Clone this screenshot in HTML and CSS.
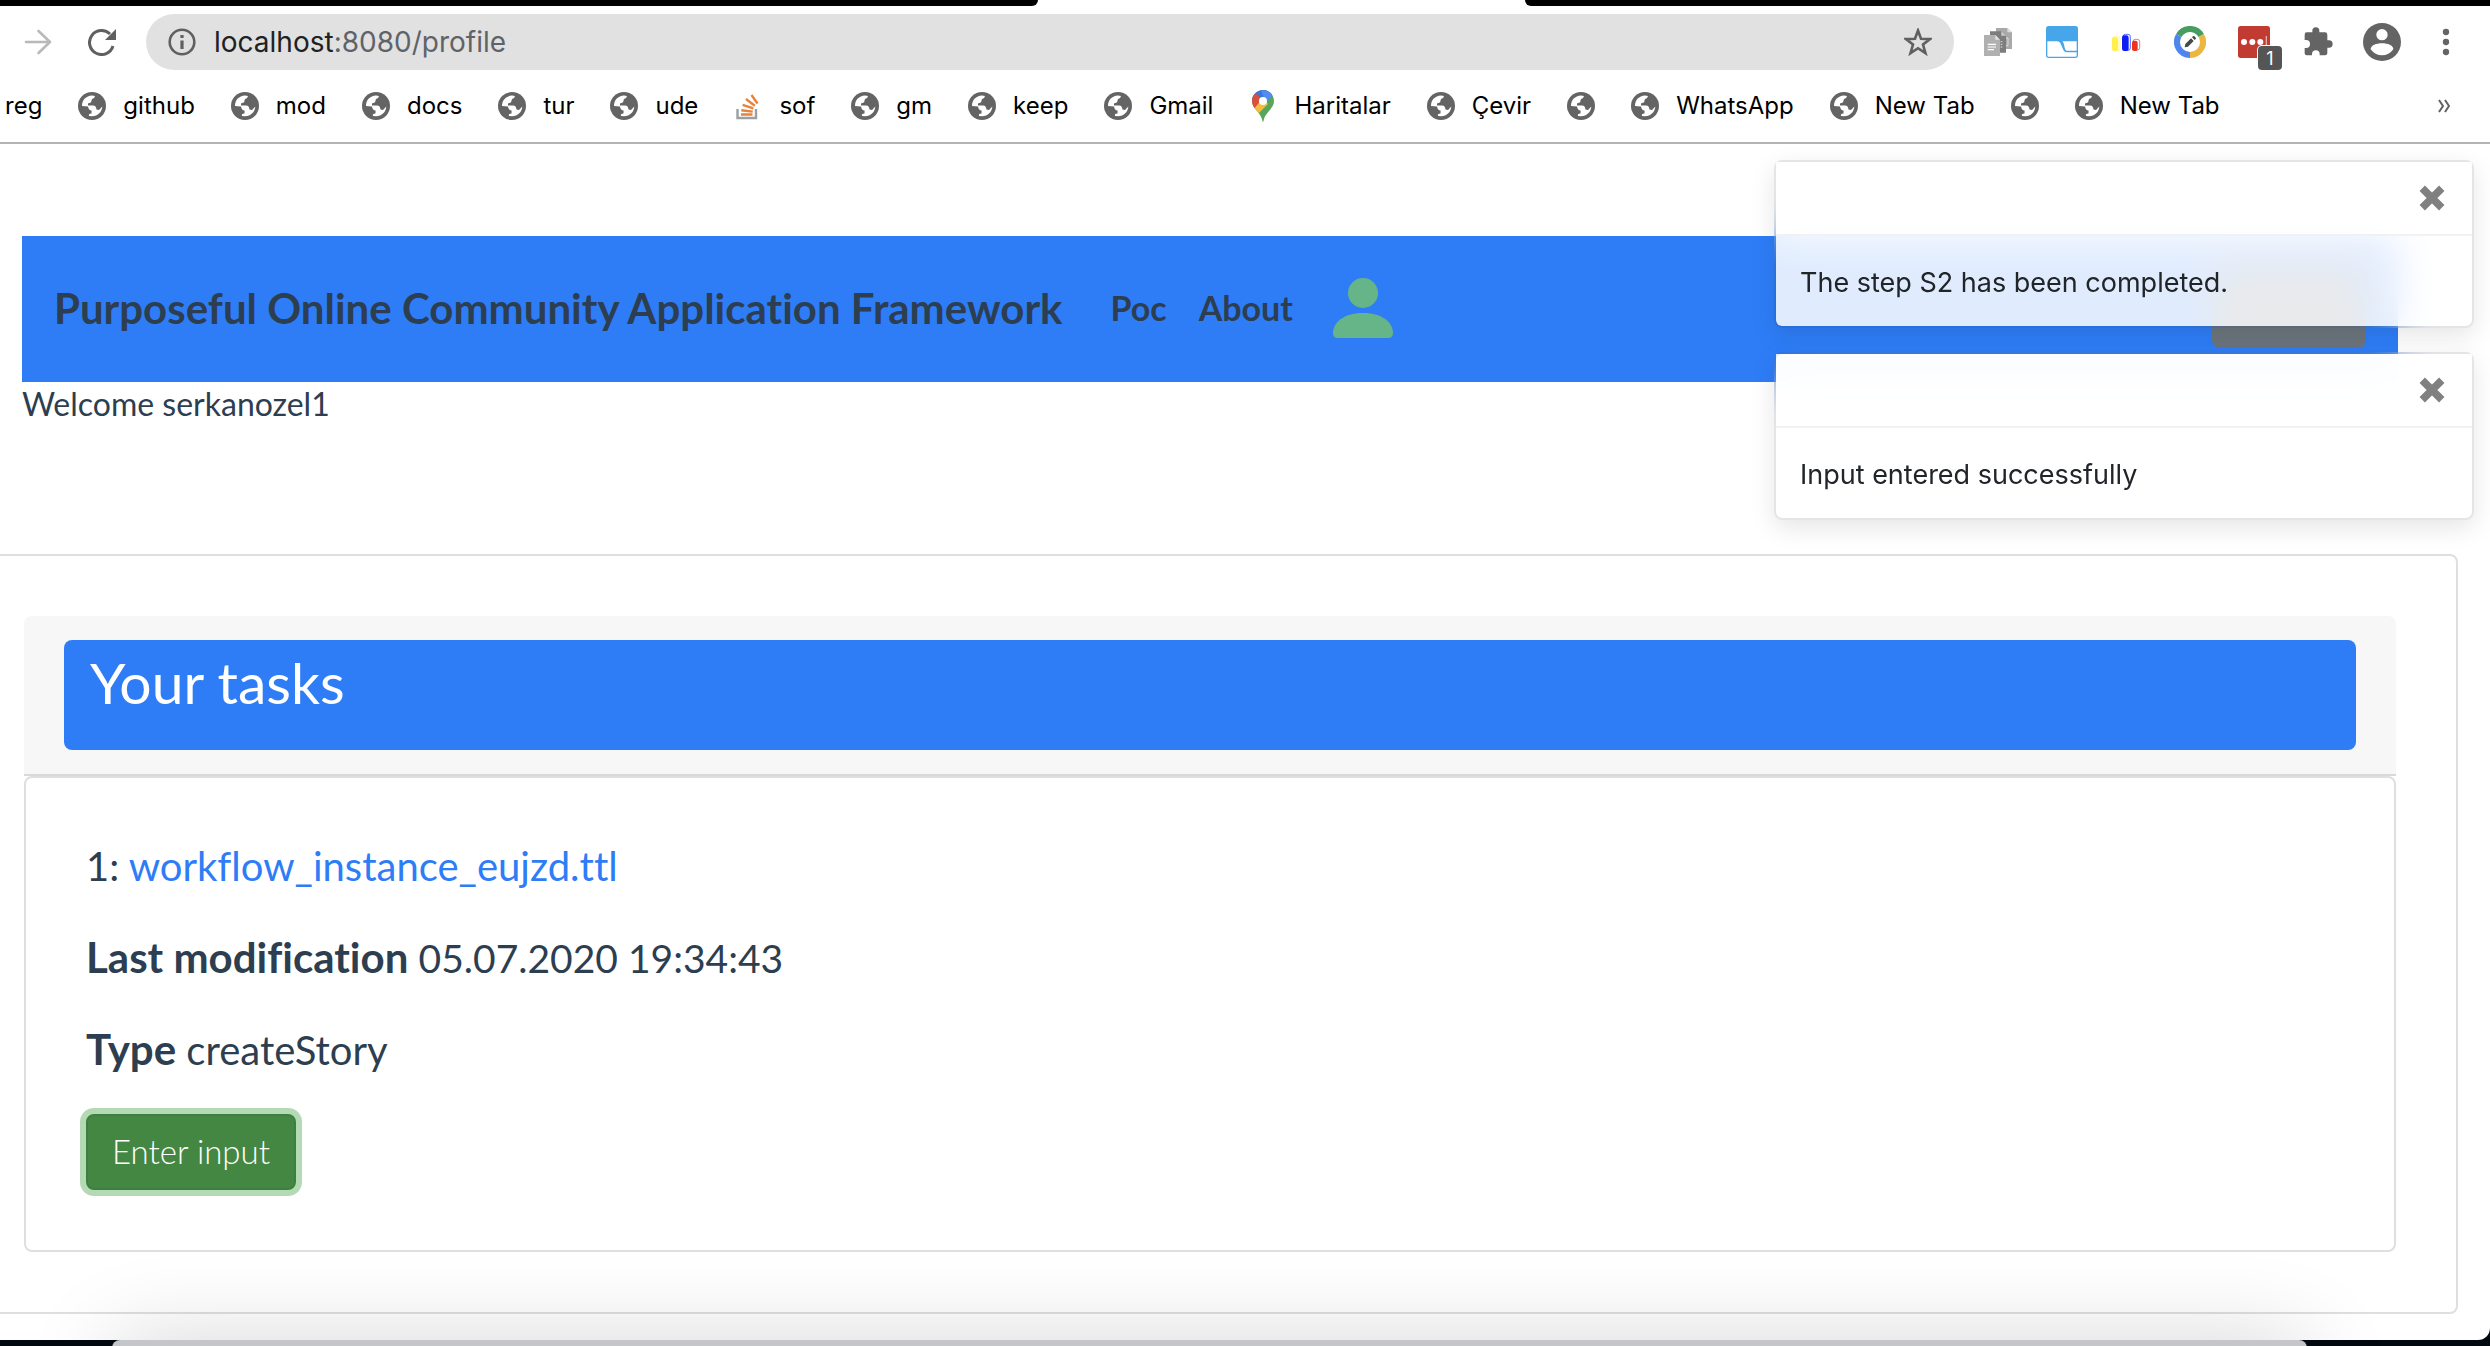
FILE: index.html
```html
<!DOCTYPE html>
<html lang="en">
<head>
<meta charset="utf-8">
<title>Purposeful Online Community Application Framework</title>
<link rel="stylesheet" href="styles.css">
</head>
<body>
<svg class="sprite" aria-hidden="true">
  <symbol id="globe" viewBox="0 0 28 28">
    <circle cx="14" cy="14" r="14" fill="#646464"/>
    <path fill="#fff" d="M4 14C4 8 8 4 14 3.6L17 4C17 6 16 7 14 7.3L13.6 9.5C13 11 11.500 10.800 10 11.500V13.600H15C17.500 13.600 18 15 18.500 17.500L21 18L24.300 14.500C24 20 20 24 14 24.300L11 24C10.500 22.500 11 21.800 13.500 21.500L13.600 18.600C11.500 18.500 10.500 17 10 14.500Z"/>
    <path fill="#646464" d="M17 3C17 6 16 6.500 14 7L13.500 9.500C13.500 11.500 18 11 18.500 14.500C20 15.500 22 14.500 23 13H26L23 5Z"/>
  </symbol>
  <symbol id="close" viewBox="0 0 24 24">
    <path d="M3 3L21 21M21 3L3 21" fill="none" stroke="#808080" stroke-width="7"/>
  </symbol>
</svg>

<div class="window">
  <div class="tabstrip"><span class="tabs-left"></span><span class="tab-active"></span><span class="tabs-right"></span></div>

  <header class="chrome">
    <div class="toolbar">
      <button class="tool" type="button" aria-label="Forward"><svg viewBox="0 0 28 28" width="28" height="28" fill="none" stroke="#b9b9b9" stroke-width="2.6" stroke-linecap="round" stroke-linejoin="round"><path d="M2 14H26M14.500 3L26 14L14.500 25"/></svg></button>
      <button class="tool" type="button" aria-label="Reload"><svg viewBox="0 0 28 28" width="28" height="28"><path d="M25 18A12 12 0 1 1 22 6" fill="none" stroke="#5f6062" stroke-width="3"/><path d="M28 1V12H17Z" fill="#5f6062"/></svg></button>
      <div class="omnibox">
        <svg viewBox="0 0 28 28" width="28" height="28"><circle cx="14" cy="14" r="12.300" fill="none" stroke="#5f6062" stroke-width="2.600"/><path d="M14 12.500V21M14 7V10" stroke="#5f6062" stroke-width="3.200"/></svg>
        <div class="url" role="textbox" aria-label="Address" tabindex="0"><span class="host">localhost</span>:8080/profile</div>
        <button class="star" type="button" aria-label="Bookmark"><svg viewBox="0 0 28 28" width="28" height="28"><path d="M14 2.500L17 10.800L26 11.100L19 16.600L21.500 25.200L14 20.200L6.500 25.200L9 16.600L2 11.100L11 10.800Z" fill="none" stroke="#5f6062" stroke-width="2.600"/></svg></button>
      </div>
      <div class="extensions">
        <button type="button" aria-label="Documents"><svg viewBox="36 63 96 96" width="32" height="32"><path d="M78 69H112L126 82V132H78Z" fill="#a9a9a9"/><path d="M112 69V82H126Z" fill="#ddd"/><path d="M60 79H94L108 92V143H60Z" fill="#7d7d7d"/><path d="M94 79V92H108Z" fill="#ccc"/><path d="M92 110H97M92 118H97M92 126H97M108 99H114V122H108" stroke="#ddd" stroke-width="3" fill="none"/><path d="M42 90H76L90 104V153H42Z" fill="#b0b0b0"/><path d="M76 90V104H90Z" fill="#e2e2e2"/><path d="M53 118H78M53 126H78M53 134H72" stroke="#fff" stroke-width="3.500"/></svg></button>
        <button type="button" aria-label="Window"><svg viewBox="228 63 96 96" width="32" height="32"><rect x="228" y="63" width="96" height="96" rx="8" fill="#47a5ea"/><path d="M232 109H262C278 109 274 141 290 142H320V152Q320 155 316 155H236Q232 155 232 152Z" fill="#fff"/><path d="M277 109H320V137H290C282 136 284 113 277 109Z" fill="#fff"/></svg></button>
        <button type="button" aria-label="Charts"><svg viewBox="420 63 96 96" width="32" height="32"><rect x="427" y="95" width="23" height="42" rx="7" fill="#fff" stroke="#fff15a" stroke-width="2"/><rect x="426" y="97" width="19" height="41" rx="7" fill="#fff04f"/><rect x="459" y="88" width="22" height="48" rx="7" fill="#fff" stroke="#0a1ef5" stroke-width="2"/><rect x="456" y="91" width="20" height="47" rx="7" fill="#0a1ef5"/><rect x="489" y="103" width="20" height="32" rx="7" fill="#fff" stroke="#ea3323" stroke-width="2"/><rect x="486" y="107" width="17" height="31" rx="6" fill="#ea3323"/></svg></button>
        <button type="button" aria-label="Editor"><svg viewBox="612 63 96 96" width="32" height="32"><g fill="none" stroke-width="20"><path d="M627 92A38 38 0 0 1 693 92" stroke="#479c5f"/><path d="M693 92A38 38 0 0 1 660 149" stroke="#edb63e"/><path d="M660 149A38 38 0 0 1 627 92" stroke="#4f86ee"/></g><circle cx="660" cy="111" r="30" fill="#fff"/><path d="M644 127L646 117L663 100L671 108L654 125ZM666 97L669 94Q672 92 675 95L677 98Q679 101 677 102L674 105Z" fill="#484848"/></svg></button>
        <button type="button" aria-label="Passwords, 1"><svg viewBox="804 63 96 96" width="32" height="32"><rect x="804" y="63" width="96" height="96" rx="8" fill="#c23b32"/><g fill="#fff"><circle cx="822" cy="111" r="9"/><circle cx="847" cy="111" r="9"/><circle cx="871" cy="111" r="9"/></g><path d="M889 93V130" stroke="#eba9a5" stroke-width="4"/></svg><span class="badge">1</span></button>
        <button type="button" aria-label="Extensions"><svg viewBox="996 63 96 96" width="32" height="32"><path fill="#646464" d="M1010 82H1027V77A10.500 10.500 0 0 1 1048 77V82H1065Q1072 82 1072 89V106H1077A11 11 0 0 1 1077 128H1072V144Q1072 151 1065 151H1049V147A11.500 11.500 0 0 0 1026 147V151H1010Q1004 151 1004 145V129H1008A12 12 0 0 0 1008 105H1004V89Q1004 82 1010 82Z"/></svg></button>
        <button type="button" aria-label="Profile"><svg viewBox="1180 54 114 114" width="38" height="38"><circle cx="1237" cy="111" r="57" fill="#646464"/><circle cx="1237" cy="89" r="17" fill="#fff"/><path d="M1203 133C1203 109 1271 109 1271 133Q1258 151 1237 151Q1216 151 1203 133Z" fill="#fff"/></svg></button>
        <button type="button" aria-label="Menu"><svg viewBox="1380 63 96 96" width="32" height="32" fill="#646464"><circle cx="1428" cy="81" r="9.500"/><circle cx="1428" cy="111" r="9.500"/><circle cx="1428" cy="141" r="9.500"/></svg></button>
      </div>
    </div>

    <nav class="bookmarks" aria-label="Bookmarks">
      <a href="#">reg</a>
      <a href="#"><svg class="fav"><use href="#globe"/></svg>github</a>
      <a href="#"><svg class="fav"><use href="#globe"/></svg>mod</a>
      <a href="#"><svg class="fav"><use href="#globe"/></svg>docs</a>
      <a href="#"><svg class="fav"><use href="#globe"/></svg>tur</a>
      <a href="#"><svg class="fav"><use href="#globe"/></svg>ude</a>
      <a href="#"><svg class="fav" viewBox="0 0 28 28"><path d="M3.500 17V26H22V17" fill="none" stroke="#9b9fa3" stroke-width="2.400"/><path d="M7 22.500H18.500M7.300 18.200L18.700 19.600M8.600 12.800L19.300 16.400M12 7L20.800 13.800M17.500 3L23.500 11.500" stroke="#e8833a" stroke-width="2.400"/></svg>sof</a>
      <a href="#"><svg class="fav"><use href="#globe"/></svg>gm</a>
      <a href="#"><svg class="fav"><use href="#globe"/></svg>keep</a>
      <a href="#"><svg class="fav"><use href="#globe"/></svg>Gmail</a>
      <a href="#"><svg class="fav fav-pin" viewBox="0 0 28 32"><clipPath id="pin"><path d="M14 0C20 0 25 5 25 11C25 19 16 22 14.500 31Q14 33 13.500 31C12 22 3 19 3 11C3 5 8 0 14 0Z"/></clipPath><g clip-path="url(#pin)"><rect width="28" height="32" fill="#57a65a"/><path d="M0 0H28L10 16L0 8Z" fill="#3a75e0"/><path d="M12 0L26 3L17 13Z" fill="#4f8bf0"/><path d="M0 3L6 3L14 10L4 21H0Z" fill="#d9503f"/><path d="M4 20L14 8L19 14L9 24Z" fill="#f2bd42"/></g><circle cx="14" cy="11" r="4" fill="#fff"/></svg>Haritalar</a>
      <a href="#"><svg class="fav"><use href="#globe"/></svg>Çevir</a>
      <a href="#" aria-label="Bookmark"><svg class="fav"><use href="#globe"/></svg></a>
      <a href="#"><svg class="fav"><use href="#globe"/></svg>WhatsApp</a>
      <a href="#"><svg class="fav"><use href="#globe"/></svg>New Tab</a>
      <a href="#" aria-label="Bookmark"><svg class="fav"><use href="#globe"/></svg></a>
      <a href="#"><svg class="fav"><use href="#globe"/></svg>New Tab</a>
      <button class="more" type="button" aria-label="More bookmarks"><svg viewBox="0 0 12 14" width="12" height="14" fill="none" stroke="#5f6062" stroke-width="2"><path d="M1 1L5 7L1 13M7 1L11 7L7 13"/></svg></button>
    </nav>
  </header>

  <div class="page">
    <nav class="navbar">
      <a class="brand" href="#">Purposeful Online Community Application Framework</a>
      <a class="nav-link" href="#">Poc</a>
      <a class="nav-link" href="#">About</a>
      <a class="user" href="#" aria-label="Profile"><svg viewBox="0 0 60 60" width="60" height="60" fill="#66b588"><circle cx="30" cy="15" r="15"/><path d="M0 55C0 45 10 35 30 35S60 45 60 55Q60 60 55 60H5Q0 60 0 55Z"/></svg></a>
      <button class="nav-button" type="button" aria-label="Account"></button>
    </nav>
    <p class="welcome">Welcome serkanozel1</p>

    <main class="panel">
      <div class="panel-header"><h3>Your tasks</h3></div>
      <section class="task">
        <p>1: <a href="#">workflow_instance_eujzd.ttl</a></p>
        <p><strong>Last modification</strong> <time>05.07.2020 19:34:43</time></p>
        <p><strong>Type</strong> createStory</p>
        <button class="enter" type="button">Enter input</button>
      </section>
    </main>

    <div class="toasts">
      <div class="toast" role="status">
        <div class="toast-header"><button type="button" aria-label="Close"><svg width="26" height="26"><use href="#close"/></svg></button></div>
        <div class="toast-body">The step S2 has been completed.</div>
      </div>
      <div class="toast" role="status">
        <div class="toast-header"><button type="button" aria-label="Close"><svg width="26" height="26"><use href="#close"/></svg></button></div>
        <div class="toast-body">Input entered successfully</div>
      </div>
    </div>
  </div>
</div>
<footer class="desktop"><div class="dock"></div></footer>
</body>
</html>
```
FILE: styles.css
```css
* { box-sizing: border-box; }

body {
  margin: 0;
  min-height: 100vh;
  display: flex;
  flex-direction: column;
  background: #02080f;
  color: #2c3e50;
  font: 32px/48px Lato, sans-serif;
  font-variant-ligatures: none;
}

button {
  padding: 0;
  border: 0;
  background: none;
  font: inherit;
}

a { text-decoration: none; }
svg { display: block; flex: none; }
.sprite { position: absolute; width: 0; height: 0; }

.window {
  flex: 1;
  display: flex;
  flex-direction: column;
  margin-bottom: 6px;
  background: #fff;
  border-radius: 0 0 12px 0;
}

/* Browser frame */
.tabstrip { display: flex; height: 6px; }
.tabs-left { flex: 1038; background: #000; border-radius: 0 0 8px 0; }
.tab-active { flex: 487; }
.tabs-right { flex: 965; background: #000; border-radius: 0 0 0 8px; }

.chrome {
  padding-bottom: 8px;
  border-bottom: 2px solid #b4b4b4;
  font-family: Inter, sans-serif;
}

.toolbar {
  display: flex;
  align-items: center;
  height: 72px;
  padding: 0 12px 0 24px;
}

.tool { margin-right: 36px; }
.tool + .tool { margin-right: 30px; }

.omnibox {
  flex: 1;
  display: flex;
  align-items: center;
  height: 56px;
  padding: 0 22px;
  border-radius: 28px;
  background: #e1e1e1;
}

.url {
  flex: 1;
  margin-left: 18px;
  color: #5f6368;
  font-size: 28px;
}
.host { color: #202124; }

.extensions { display: flex; margin-left: 12px; }
.extensions button {
  position: relative;
  display: flex;
  align-items: center;
  justify-content: center;
  width: 64px;
  height: 38px;
}

.badge {
  position: absolute;
  left: 36px;
  top: 23px;
  width: 24px;
  height: 24px;
  border-radius: 4px;
  background: #555;
  color: #fff;
  font-size: 18px;
  line-height: 25px;
  box-shadow: 0 0 0 1px #fff;
}

.bookmarks {
  display: flex;
  align-items: center;
  gap: 36px;
  height: 56px;
  padding: 0 40px 0 5px;
}
.bookmarks a {
  display: flex;
  align-items: center;
  gap: 17px;
  color: #000;
  font-size: 24px;
  line-height: 32px;
}
.fav { width: 28px; height: 28px; }
.fav-pin { height: 32px; }
.more { margin-left: auto; }

/* Application */
.page {
  position: relative;
  flex: 1;
  padding: 92px 32px 24px 0;
}

.navbar {
  display: flex;
  align-items: center;
  height: 146px;
  margin: 0 60px 0 22px;
  padding: 0 32px 2px;
  background: #2e7df7;
}
.brand {
  margin-right: 32px;
  color: #2c3e50;
  font-size: 42px;
  font-weight: 700;
}
.nav-link {
  padding: 0 16px;
  color: #2c3e50;
  font-size: 34px;
  font-weight: 700;
}
.user { margin-left: 24px; }
.nav-button {
  width: 154px;
  height: 80px;
  margin-left: auto;
  border-radius: 8px;
  background: #6c757d;
}

.welcome {
  margin: 0 22px;
  line-height: 44px;
}

.panel {
  margin-top: 128px;
  padding: 60px 60px 60px 24px;
  border: 2px solid #dfdfdf;
  border-left: 0;
  border-radius: 0 8px 8px 0;
}

.panel-header {
  padding: 24px 40px;
  border-bottom: 2px solid #d9d9d9;
  border-radius: 8px 8px 0 0;
  background: #f7f7f7;
}
.panel-header h3 {
  margin: 0;
  padding: 8px 26px 34px;
  border-radius: 8px;
  background: #2e7df7;
  color: #fff;
  font-size: 57px;
  font-weight: 400;
  line-height: 68px;
}

.task {
  padding: 58px 60px 60px;
  border: 2px solid #dfdfdf;
  border-radius: 8px;
  font-size: 40px;
  line-height: 60px;
}
.task p { margin: 0 0 32px; }
.task a { color: #2e7df7; }
.task strong { font-size: 42px; font-weight: 700; line-height: 48px; }
.task time { font-size: 39px; line-height: 48px; }

.enter {
  display: block;
  height: 76px;
  margin-top: 34px;
  padding: 0 24px 2px;
  border: 2px solid #3d7f3f;
  border-radius: 8px;
  background: #448743;
  box-shadow: 0 0 0 6px #b4dab5;
  color: #fff;
  font-size: 33px;
  font-weight: 300;
}

/* Notifications */
.toasts {
  position: absolute;
  top: 16px;
  right: 16px;
  display: grid;
  gap: 24px;
  width: 700px;
  color: #212529;
  font: 27px/42px Inter, sans-serif;
}
.toast {
  border: 2px solid rgba(0, 0, 0, 0.1);
  border-radius: 8px;
  background: rgba(255, 255, 255, 0.85);
  background-clip: padding-box;
  box-shadow: 0 8px 24px rgba(0, 0, 0, 0.1);
  backdrop-filter: blur(20px);
}
.toast-header {
  display: flex;
  justify-content: flex-end;
  padding: 12px 24px;
  border-bottom: 2px solid rgba(0, 0, 0, 0.05);
  background: rgba(255, 255, 255, 0.85);
}
.toast-header button {
  display: grid;
  place-items: center;
  width: 32px;
  height: 48px;
}
.toast-body { padding: 26px 24px 22px; }

/* Dock rising from below the window, with its shadow cast on the page */
.desktop {
  height: 126px;
  margin-top: -126px;
  padding: 120px 183px 0 112px;
  overflow: hidden;
  position: relative;
  pointer-events: none;
}
.dock {
  height: 200px;
  border-radius: 8px 8px 0 0;
  background: #c5c6ca;
  box-shadow: 0 0 90px rgba(0, 0, 0, 0.16);
}
```
